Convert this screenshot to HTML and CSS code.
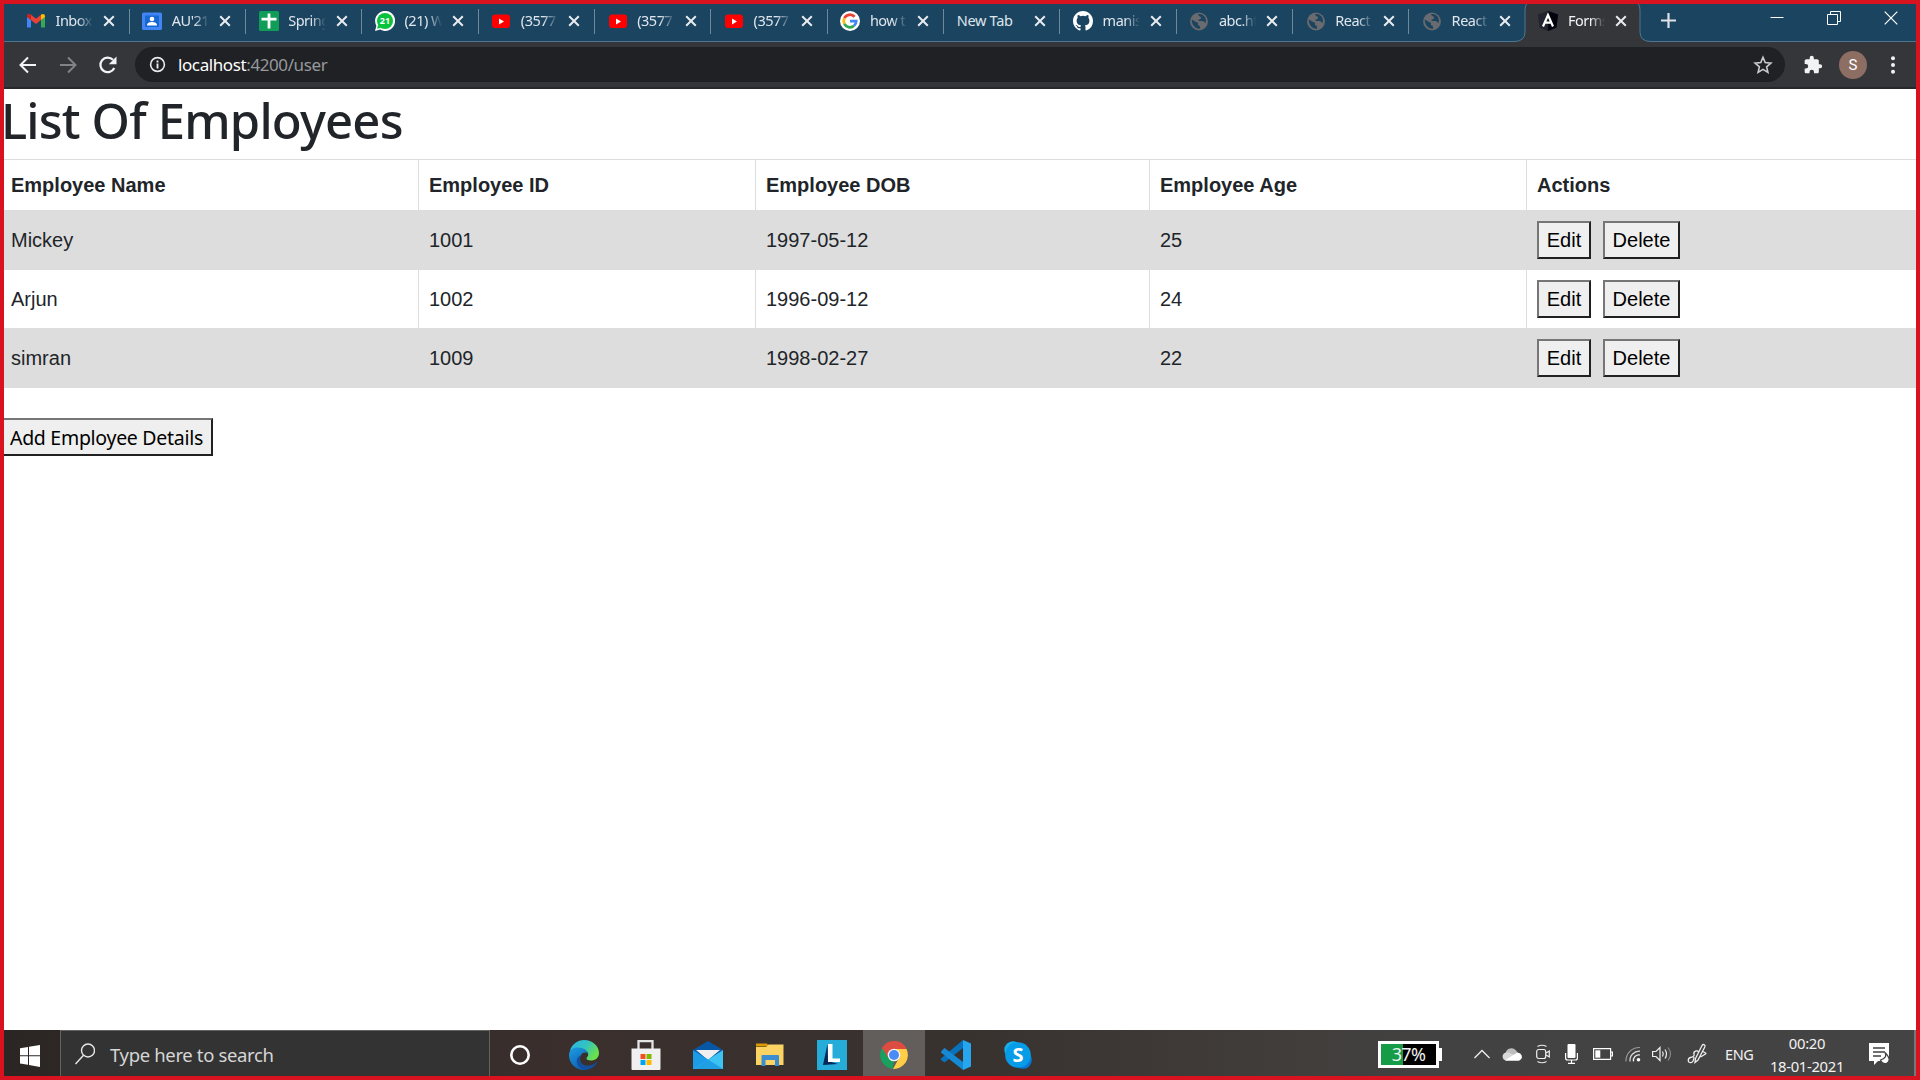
FILE: index.html
```html
<!DOCTYPE html>
<html lang="en">
<head>
<meta charset="utf-8">
<title>Forms</title>
<link rel="stylesheet" href="styles.css">
</head>
<body>
<svg class="defs" width="0" height="0">
  <symbol id="x" viewBox="0 0 12 12"><path d="M1.2 1.2l9.6 9.6M10.8 1.2l-9.6 9.6" stroke="currentColor" stroke-width="2" fill="none"/></symbol>
  <symbol id="yt" viewBox="0 0 20 20"><rect x="1" y="3.5" width="18" height="13.5" rx="3" fill="#f00"/><path d="M8 7.4v6l5-3z" fill="#fff"/></symbol>
  <symbol id="globe" viewBox="0 0 20 20"><circle cx="10" cy="10.5" r="8.9" fill="#696b6e"/><path d="M9 3.2c3-.8 6 .8 7.300 3.500.8 2 .8 4 .1 5.500-1-1.200-1.500-2.200-3.400-2.200H9.500V8.500c1.800 0 2.500-.4 2.500-2 0-1.200-2.200-1-3-3.300zM2.800 8.500c2.700 1.500 4.200 2.800 6.200 3.300v2.500c1.800 0 2.200 1.200 2.200 3.400-4.800.6-8.800-4-8.400-9.200z" fill="#1b4461"/></symbol>
</svg>

<header class="tabs">
  <div class="tab"><svg class="fav" viewBox="0 0 20 20"><path d="M1 5v11.500h4V9z" fill="#4285f4"/><path d="M15 9v7.500h4V5z" fill="#34a853"/><path d="M1 5.500C1 3 3.500 2.500 5 3.800l5 4 5-4V9l-5 4-5-4-4-3z" fill="#ea4335"/><path d="M1 5.500C1 3 3.500 2.500 5 3.800V9L1 6z" fill="#c5221f"/><path d="M19 5.500c0-2.500-2.500-3-4-1.700V9l4-3z" fill="#fbbc04"/></svg><span class="label">Inbox</span><svg class="close"><use href="#x"/></svg></div>
  <div class="tab"><svg class="fav" viewBox="0 0 20 20"><rect y="1.500" width="20" height="17.500" rx="1.500" fill="#4285f4"/><rect x="3" y="4.500" width="14" height="11.500" fill="#1967d2"/><circle cx="10" cy="8" r="2.300" fill="#fff"/><path d="M5 14.500c0-3 3-3.500 5-3.500s5 .5 5 3.500z" fill="#fff"/></svg><span class="label">AU'21</span><svg class="close"><use href="#x"/></svg></div>
  <div class="tab"><svg class="fav" viewBox="0 0 20 20"><rect width="20" height="20" rx="1.500" fill="#0f9d58"/><path d="M10 2.500v15M2.500 8.200h15" stroke="#fff" stroke-width="2.800"/></svg><span class="label">Spring</span><svg class="close"><use href="#x"/></svg></div>
  <div class="tab"><svg class="fav" viewBox="0 0 20 20"><path d="M0 20l1.400-5.200A10 10 0 1 1 5.200 18.600z" fill="#fff"/><circle cx="10" cy="10" r="8" fill="#0ac33c"/><path d="M2 17.800l1.200-4 3 3z" fill="#0ac33c"/><text x="10" y="13.400" class="wa">21</text></svg><span class="label">(21) W</span><svg class="close"><use href="#x"/></svg></div>
  <div class="tab"><svg class="fav"><use href="#yt"/></svg><span class="label">(3577</span><svg class="close"><use href="#x"/></svg></div>
  <div class="tab"><svg class="fav"><use href="#yt"/></svg><span class="label">(3577</span><svg class="close"><use href="#x"/></svg></div>
  <div class="tab"><svg class="fav"><use href="#yt"/></svg><span class="label">(3577</span><svg class="close"><use href="#x"/></svg></div>
  <div class="tab"><svg class="fav" viewBox="0 0 20 20"><circle cx="10" cy="10" r="10" fill="#fff"/><g fill="none" stroke-width="2.800"><path d="M4.400 7.200A6.200 6.200 0 0 1 14.600 5.800" stroke="#ea4335"/><path d="M4.400 7.200a6.200 6.200 0 0 0 0 5.600" stroke="#fbbc05"/><path d="M4.400 12.800a6.200 6.200 0 0 0 9.600 2" stroke="#34a853"/><path d="M10 10.200h6.200a6.200 6.200 0 0 1-2.200 4.600" stroke="#4285f4"/></g></svg><span class="label">how t</span><svg class="close"><use href="#x"/></svg></div>
  <div class="tab"><span class="label wide">New Tab</span><svg class="close"><use href="#x"/></svg></div>
  <div class="tab"><svg class="fav" viewBox="0 0 16 16"><path fill="#fff" d="M8 0C3.580 0 0 3.580 0 8c0 3.540 2.290 6.530 5.470 7.590.4.070.55-.17.55-.38 0-.19-.01-.82-.01-1.490-2.010.37-2.530-.49-2.690-.94-.09-.23-.48-.94-.82-1.130-.28-.15-.68-.52-.01-.53.63-.01 1.080.58 1.230.82.72 1.210 1.870.87 2.330.66.070-.52.28-.87.51-1.070-1.780-.2-3.640-.89-3.640-3.950 0-.87.31-1.590.82-2.150-.08-.2-.36-1.020.08-2.120 0 0 .67-.21 2.200.82a7.500 7.500 0 0 1 4 0c1.530-1.040 2.200-.82 2.200-.82.44 1.100.16 1.920.08 2.120.51.56.82 1.270.82 2.150 0 3.070-1.870 3.750-3.650 3.950.29.25.54.73.54 1.480 0 1.070-.01 1.930-.01 2.200 0 .21.150.46.55.38A8.010 8.010 0 0 0 16 8c0-4.420-3.580-8-8-8z"/></svg><span class="label">manis</span><svg class="close"><use href="#x"/></svg></div>
  <div class="tab"><svg class="fav"><use href="#globe"/></svg><span class="label">abc.ht</span><svg class="close"><use href="#x"/></svg></div>
  <div class="tab"><svg class="fav"><use href="#globe"/></svg><span class="label">React</span><svg class="close"><use href="#x"/></svg></div>
  <div class="tab last"><svg class="fav"><use href="#globe"/></svg><span class="label">React</span><svg class="close"><use href="#x"/></svg></div>
  <div class="tab active"><svg class="tabshape" viewBox="0 0 138 39"><path d="M0 37.500Q11 37.500 11 28V6q0-5 2-6h111q2 1 2 6v22q0 9.500 11 9.500v2H0z" fill="#35363a"/><path d="M0 37.500Q11 37.500 11 28V6q0-5 2-6M124 0q2 1 2 6v22q0 9.500 11 9.500" fill="none" stroke="#4d7592"/></svg><svg class="fav" viewBox="0 0 20 20"><path d="M10 0l10 3.500-1.500 13L10 20l-8.500-3.500L0 3.500z" fill="#23232f"/><path d="M10 0l10 3.500-1.500 13L10 20z" fill="#02030d"/><path d="M5 15.500L10 4l5 11.500M7 11.700h6" fill="none" stroke="#fff" stroke-width="2.200"/></svg><span class="label">Forms</span><svg class="close"><use href="#x"/></svg></div>
  <svg class="plus" viewBox="0 0 15 15"><path d="M7.500 0v15M0 7.500h15" stroke="#dee1e6" stroke-width="2.200"/></svg>
  <div class="winctl">
    <svg viewBox="0 0 14 14"><path d="M.5 6.500h13" stroke="#fff"/></svg>
    <svg viewBox="0 0 14 14"><path d="M.5 3.500h10v10H.5zM3.500 3V.5h10v10H11" fill="none" stroke="#fff"/></svg>
    <svg viewBox="0 0 14 14"><path d="M.7.700l12.600 12.600M13.300.7L.7 13.300" stroke="#fff" stroke-width="1.200"/></svg>
  </div>
</header>

<nav class="toolbar">
  <svg class="ic" viewBox="0 0 20 20"><path d="M18 10H3M10 2.500L2.500 10l7.500 7.500" fill="none" stroke="#f1f3f4" stroke-width="2"/></svg>
  <svg class="ic" viewBox="0 0 20 20"><path d="M2 10h15M10 2.500l7.500 7.500-7.500 7.500" fill="none" stroke="#828387" stroke-width="2"/></svg>
  <svg class="ic reload" viewBox="0 0 20 20"><path d="M16.300 13A7.300 7.300 0 1 1 15 4.800" fill="none" stroke="#f1f3f4" stroke-width="2.200"/><path d="M18.500 1.500v7.700h-7.700z" fill="#f1f3f4"/></svg>
  <div class="omnibox">
    <svg class="info" viewBox="0 0 18 18"><circle cx="9" cy="9" r="7.300" fill="none" stroke="#e8eaed" stroke-width="1.700"/><path d="M9 8v5.200M9 4.800v2" stroke="#e8eaed" stroke-width="2"/></svg>
    <span class="url"><span class="host">localhost</span><span class="path">:4200/user</span></span>
    <svg class="star" viewBox="0 0 20 20"><path d="M10 2.300l2.200 5.300 5.700.5-4.300 3.700 1.300 5.600-4.900-3-4.900 3 1.300-5.600L2.100 8.100l5.700-.5z" fill="none" stroke="#c9cbce" stroke-width="1.600"/></svg>
  </div>
  <svg class="ext" viewBox="0 0 24 24"><path fill="#f1f3f4" d="M20.500 11H19V7c0-1.100-.9-2-2-2h-4V3.500a2.500 2.500 0 0 0-5 0V5H4c-1.100 0-2 .9-2 2v3.800h1.500a2.700 2.700 0 0 1 0 5.400H2V20c0 1.100.9 2 2 2h3.800v-1.500a2.700 2.700 0 0 1 5.400 0V22H17c1.100 0 2-.9 2-2v-4h1.500a2.500 2.500 0 0 0 0-5z"/></svg>
  <div class="avatar">S</div>
  <svg class="dots" viewBox="0 0 6 18"><g fill="#f1f3f4"><circle cx="3" cy="2.300" r="2"/><circle cx="3" cy="9" r="2"/><circle cx="3" cy="15.700" r="2"/></g></svg>
</nav>

<main class="page">
  <h1>List Of Employees</h1>
  <table>
    <colgroup><col class="c1"><col class="c2"><col class="c3"><col class="c4"><col></colgroup>
    <thead><tr><th>Employee Name</th><th>Employee ID</th><th>Employee DOB</th><th>Employee Age</th><th>Actions</th></tr></thead>
    <tbody>
      <tr class="odd"><td>Mickey</td><td>1001</td><td>1997-05-12</td><td>25</td><td><div class="acts"><button>Edit</button><button>Delete</button></div></td></tr>
      <tr class="even"><td>Arjun</td><td>1002</td><td>1996-09-12</td><td>24</td><td><div class="acts"><button>Edit</button><button>Delete</button></div></td></tr>
      <tr class="odd"><td>simran</td><td>1009</td><td>1998-02-27</td><td>22</td><td><div class="acts"><button>Edit</button><button>Delete</button></div></td></tr>
    </tbody>
  </table>
  <button class="add">Add Employee Details</button>
</main>

<footer class="taskbar">
  <div class="start"><svg viewBox="0 0 20 22"><path d="M0 3.200l8-1.200v8.300H0zM9 1.800L20 0v10.300H9zM0 11.300h8v8.400l-8-1.200zM9 11.300h11V22L9 20z" fill="#fff"/></svg></div>
  <div class="search"><svg viewBox="0 0 20 22"><circle cx="13" cy="7.500" r="6.500" fill="none" stroke="#e8e8e8" stroke-width="1.400"/><path d="M8.500 12.300L.5 21" stroke="#e8e8e8" stroke-width="1.400"/></svg><span>Type here to search</span></div>
  <div class="apps">
    <div class="app cortana"><svg viewBox="0 0 30 30"><circle cx="15" cy="15" r="8.700" fill="none" stroke="#fff" stroke-width="2.600"/></svg></div>
    <div class="app"><svg viewBox="0 0 30 30"><defs><linearGradient id="ea" x1="0" y1="0" x2="1" y2=".5"><stop offset="0" stop-color="#2bb3e8"/><stop offset=".55" stop-color="#32c3c0"/><stop offset="1" stop-color="#6be04a"/></linearGradient><linearGradient id="eb" x1="0" y1="0" x2=".5" y2="1"><stop offset="0" stop-color="#1b9de2"/><stop offset="1" stop-color="#0f63b5"/></linearGradient></defs><path d="M.8 11C3 4 8.500 0 15 0c8.500 0 15 6 15 13 0 5-4 7.500-8 7.500-3.500 0-5-1.500-4.500-2.500 1.500-1.500 2-3 1.500-5C17.500 9 8 5 .8 11z" fill="url(#ea)"/><path d="M0 15C0 10 4 7.500 8.500 7.500c6 0 10 3 10.500 6.500-2-2-5-2-7 1-3 5 1 12 7 14.500C8 32 0 24 0 15z" fill="url(#eb)"/><path d="M12 15c-3 5 0 9.500 5 10.500 5 .8 8.500-1.500 10.500-3.500.7-.6 1 0 .5.800-3 4.700-7 6.800-12 7.200C7 28 5 18 12 15z" fill="#124f9c"/></svg></div>
    <div class="app"><svg viewBox="0 0 30 30"><path d="M7.500 10V1.200h14V10" fill="none" stroke="#e4e4e4" stroke-width="2.300"/><path d="M.5 8.500h29V29q0 1-1 1h-27q-1 0-1-1z" fill="#f0f0f0"/><path d="M9.500 14h5v5h-5z" fill="#f25022"/><path d="M15.500 14h5v5h-5z" fill="#7fba00"/><path d="M9.500 20h5v5h-5z" fill="#00a4ef"/><path d="M15.500 20h5v5h-5z" fill="#ffb900"/></svg></div>
    <div class="app"><svg viewBox="0 0 30 30"><path d="M0 10L15 1l15 9-15 12z" fill="#0857a5"/><path d="M3 10h24L15 20z" fill="#efeff2"/><path d="M0 10l30 19H0z" fill="#1c9be6"/><path d="M30 10L0 29h30z" fill="#3cc2f3"/><path d="M15 19.500L0 29h30z" fill="#209fe4"/></svg></div>
    <div class="app"><svg viewBox="0 0 30 30"><path d="M1 3.500h11l2 3H1z" fill="#dc9800"/><path d="M1 7h10l2.500-2.500H28.500V25H1z" fill="#fcd362"/><path d="M6.500 26V16q0-1 1-1h15.500q1 0 1 1v10h-4v-6h-9.500v6z" fill="#3a8dd0"/></svg></div>
    <div class="app"><svg viewBox="0 0 30 30"><path d="M0 0h30v30H0z" fill="#26acd9"/><path d="M10.500 4L6 25l15-1-10-3z" fill="#06285a"/><path d="M11 4h4.500v14.500H23V22H11z" fill="#fff"/></svg></div>
    <div class="app on"><svg viewBox="0 0 30 30"><path d="M15 15L3 8A14 14 0 0 1 27.500 8.500z" fill="#dd4c40"/><path d="M15 15L3 8A14 14 0 0 0 14 29z" fill="#19a05e"/><path d="M3 8A14 14 0 0 1 27.500 9H15l-5.500 9z" fill="#dd4c40"/><path d="M15 9H27.500A14 14 0 0 1 14 29l6-11z" fill="#ffcd46"/><circle cx="15" cy="15" r="6.300" fill="#f5f5f5"/><circle cx="15" cy="15" r="5" fill="#4a8bf5"/></svg></div>
    <div class="app"><svg viewBox="0 0 30 30"><path d="M22 0l8 3.500v23L22 30z" fill="#27a6f0"/><path d="M22 0v8L3.500 22.500 0 20v-1.500z" fill="#0872bd"/><path d="M0 11.500L3.500 8 22 22v8L0 12.500z" fill="#1689d4"/></svg></div>
    <div class="app"><svg viewBox="0 0 30 30"><circle cx="10" cy="10" r="8.700" fill="#16b1ed"/><circle cx="20" cy="20" r="8.800" fill="#0978d4"/><circle cx="15" cy="15" r="12.800" fill="#079ce7"/><text x="15" y="22" class="sk">S</text></svg></div>
  </div>
  <div class="tray">
    <div class="battery"><span class="pct">37%</span></div>
    <svg class="chev" viewBox="0 0 16 10"><path d="M.5 9L8 1.500 15.500 9" fill="none" stroke="#eee" stroke-width="1.300"/></svg>
    <svg class="cloud" viewBox="0 0 20 14"><path d="M3.500 6A6 6 0 0 1 14 3.500L17 7 5 12z" fill="#bdbdbd"/><path d="M4 13.500a4 4 0 0 1-.5-7.800C5 5 7 5.500 8.500 6.300L14 9z" fill="#d8d8d8"/><path d="M3 13.200L14.500 6a4 4 0 0 1 2.500 7.700H4.500z" fill="#fff"/></svg>
    <svg class="meet" viewBox="0 0 14 20"><g fill="none" stroke="#eee" stroke-width="1.200"><rect x=".7" y="5.500" width="9" height="9" rx="2"/><path d="M10 9l3.300-2v6L10 11M1.500 2.500Q6 0 10.500 2.500M1.500 17.500q4.500 2.500 9 0"/></g></svg>
    <svg class="mic" viewBox="0 0 13 20"><rect x="2.500" width="8" height="14" rx="1" fill="#fff"/><path d="M.6 9v5q0 2 2 2h7.800q2 0 2-2V9M6.500 16v3.500M3 19.400h7" fill="none" stroke="#fff" stroke-width="1.200"/></svg>
    <svg class="batt" viewBox="0 0 20 12"><path d="M.6.600h17v10.800H.6zM18 4h1.400v4H18" fill="none" stroke="#fff" stroke-width="1.200"/><path d="M2.300 2.300h5v7.400h-5z" fill="#fff"/></svg>
    <svg class="wifi" viewBox="0 0 16 16"><circle cx="13.500" cy="13.800" r="1.800" fill="#fff"/><g fill="none" stroke-width="1.200"><path d="M8.500 15.500a5.500 5.500 0 0 1 6.500-6.500" stroke="#eee"/><path d="M5 15.500A9.300 9.300 0 0 1 15 5.200" stroke="#ddd"/><path d="M1 15.500A13.300 13.300 0 0 1 15 1.500" stroke="#999"/></g></svg>
    <svg class="vol" viewBox="0 0 20 18"><g fill="none" stroke="#eee" stroke-width="1.200"><path d="M.6 6.500H4L8 2.500v13l-4-4H.6zM10.500 6.500q1.500 2.500 0 5M13 4.500q3 4.500 0 9"/><path d="M16 2.500q5 6.500 0 13" stroke="#888"/></g></svg>
    <svg class="pen" viewBox="0 0 20 22"><path d="M8.500 15.500L15 2.500q1-1.500 2.300-.8 1.200.8.500 2.300L11 17l-3 2.500zM11.500 9c-1-2.500-5.500-.5-4.500 2 .8 2.300-1.500 3-3.500 3.500-3 .8-3 5.500.3 5.200 2.700-.3 3-3.200 3.200-5.700M15 8l3.500 2q.8.500 0 1l-5 3" fill="none" stroke="#eee" stroke-width="1.300"/></svg>
    <span class="lang">ENG</span>
    <div class="clock"><span>00:20</span><span class="date">18-01-2021</span></div>
    <svg class="note" viewBox="0 0 21 22"><path d="M0 0h20v18H9l-4 4v-4H0z" fill="#fff"/><path d="M4 5h12M4 9h12M4 13h8" stroke="#434242" stroke-width="1.500"/><path d="M16 9.500q2.500 5.500-4.500 7.500 2 4.500 6 3.500 6-3-1.500-11z" fill="#fff" stroke="#434242" stroke-width="1.200"/></svg>
  </div>
</footer>
</body>
</html>
```
FILE: styles.css
```css
* { box-sizing: border-box; }
html, body { height: 100%; margin: 0; }
body {
  display: flex; flex-direction: column; overflow: hidden;
  border: 4px solid #d9121f; background: #fff;
  font-family: "Noto Sans", "Open Sans", sans-serif;
}
.defs { display: none; }
svg { display: block; flex: none; }

/* tab strip */
.tabs {
  display: flex; flex: none; height: 38px; padding-left: 8.3px;
  background: #1b4461; border-bottom: 1px solid #4d7592; color: #dfe6ec;
}
.tab {
  position: relative; display: flex; flex: none; align-items: center;
  width: 116.35px; height: 34px; padding-left: 13.700px;
}
.tab::after {
  content: ""; position: absolute; right: -1px; top: 5px;
  width: 1px; height: 25px; background: #6d899c;
}
.tab.last::after, .tab.active::after { display: none; }
.fav { position: relative; width: 20px; height: 20px; margin-right: 9.500px; }
.label {
  position: relative; top: -1px; width: 37.500px; overflow: hidden; white-space: nowrap;
  font-size: 14.5px; line-height: 20px; letter-spacing: -.5px;
  -webkit-mask-image: linear-gradient(90deg, #000 60%, transparent);
  mask-image: linear-gradient(90deg, #000 60%, transparent);
}
.label.wide { width: 67px; letter-spacing: -.3px; -webkit-mask-image: none; mask-image: none; }
.close { position: relative; width: 12px; height: 12px; margin-left: 10px; color: #e8ecef; }
.active { color: #f1f3f4; }
.tabshape { position: absolute; left: -11px; top: 0; width: 138px; height: 39px; }
.plus { width: 15px; height: 15px; margin: 9px 0 0 20px; }
.winctl { display: flex; gap: 43px; margin: 7px 18px 0 auto; }
.winctl svg { width: 14px; height: 14px; }
.wa { font: 700 9px "Open Sans", sans-serif; fill: #fff; text-anchor: middle; }

/* toolbar */
.toolbar {
  display: flex; flex: none; align-items: center; height: 47px; padding: 0 20px 0 14px;
  background: #35363a; border-bottom: 2px solid #27282b;
}
.ic { width: 20px; height: 20px; margin-right: 20px; }
.reload { margin-right: 17px; }
.omnibox {
  display: flex; flex: none; align-items: center; width: 1650px; height: 35px;
  padding: 0 12px 0 14px; border-radius: 18px; background: #202124;
}
.info { width: 17px; height: 17px; margin-right: 12px; }
.url { flex: 1; font-size: 17px; line-height: 24px; letter-spacing: -.4px; }
.host { color: #fff; }
.path { color: #96999d; }
.star { width: 20px; height: 20px; }
.ext { width: 20px; height: 20px; margin-left: 18px; }
.avatar {
  width: 28px; height: 28px; margin-left: 16px; border-radius: 50%; background: #8d6e63;
  color: #fff; font: 15px/28px Roboto, sans-serif; text-align: center;
}
.dots { width: 6px; height: 18px; margin-left: 23px; }

/* page */
.page { flex: 1; overflow: hidden; color: #212529; }
h1 {
  margin: 0 0 0 -3px; height: 70px; font-size: 49px; line-height: 63px;
  font-weight: 500; letter-spacing: -.820px; white-space: nowrap;
}
table {
  width: 100%; table-layout: fixed; border-collapse: separate; border-spacing: 0;
  border-top: 1px solid #ddd; font: 20px/30px "Liberation Sans", Arial, sans-serif;
}
.c1 { width: 415px; } .c2 { width: 337px; } .c3 { width: 394px; } .c4 { width: 377px; }
th, td { padding: 0 0 0 10px; text-align: left; border-right: 1px solid #ddd; }
th:first-child, td:first-child { padding-left: 7px; }
th:last-child, td:last-child { border-right: 0; }
th { height: 50px; }
td { height: 60px; }
.even td { height: 58px; }
.odd { background: #ddd; }
.acts { display: flex; gap: 12px; }
button {
  height: 38px; padding: 0; border: 2px solid; border-color: #767676 #212121 #212121 #767676;
  border-radius: 0; background: #efefef; color: #000; font: 20px/30px "Liberation Sans", Arial, sans-serif;
}
.acts button:first-child { width: 54px; }
.acts button:last-child { width: 77px; }
.add {
  display: block; width: 213px; margin: 30px 0 0 -4px; padding-top: 2px;
  font: 19.500px/30px "Noto Sans", sans-serif; letter-spacing: -.28px; white-space: nowrap;
}

/* taskbar */
.taskbar {
  display: flex; flex: none; height: 46px; color: #f2f2f2;
  background: linear-gradient(90deg, #2b2624, #3a2f2d 30%, #38322f 50%, #403c39 65%, #434242 75%, #444445);
}
.start { width: 56px; padding: 15px 0 0 16px; }
.start svg { width: 20px; height: 22px; }
.search {
  display: flex; align-items: center; width: 430px; padding: 1px 0 0 14px; margin-right: -1px;
  background: #333; border: 1px solid #62615f; border-bottom: 0; color: #d6d6d6;
  font-size: 18.500px; letter-spacing: -.35px;
}
.search svg { width: 20px; height: 22px; margin-right: 15px; }
.apps { display: flex; }
.app { display: flex; align-items: flex-start; justify-content: center; width: 62px; padding-top: 10px; }
.app svg { width: 30px; height: 30px; }
.app.cortana { width: 64px; padding-right: 2px; }
.on { background: #625e5b; }
.sk { font: 700 20px "Open Sans", sans-serif; fill: #fff; text-anchor: middle; }
.tray { display: flex; flex: 1; align-items: center; padding: 2px 0 0; margin-left: 329px; border-right: 2px solid #777; }
.battery {
  position: relative; width: 61px; height: 27px; border: 3px solid #fff; margin-right: 35px;
  background: linear-gradient(90deg, #169b47 22px, #000 22px);
  text-align: center; font-size: 18px; line-height: 21px; letter-spacing: -.6px;
}
.battery::after { content: ""; position: absolute; right: -6px; top: 4px; width: 3px; height: 13px; background: #fff; }
.chev { width: 16px; height: 10px; margin-right: 12px; }
.cloud { width: 20px; height: 14px; margin-right: 14px; }
.meet { width: 14px; height: 20px; margin-right: 15px; }
.mic { width: 13px; height: 20px; margin-right: 15px; }
.batt { width: 20px; height: 12px; margin-right: 12px; }
.wifi { width: 16px; height: 16px; margin-right: 11px; }
.vol { width: 20px; height: 18px; margin-right: 15px; }
.pen { width: 20px; height: 22px; margin-right: 18px; }
.lang { width: 28px; font-size: 14.500px; letter-spacing: -.4px; }
.clock {
  display: flex; flex-direction: column; align-items: center; width: 76px; margin: 2px 24px 0 16px;
  font-size: 14.800px; line-height: 23px; letter-spacing: -.3px; white-space: nowrap;
}
.note { width: 21px; height: 22px; }
```
